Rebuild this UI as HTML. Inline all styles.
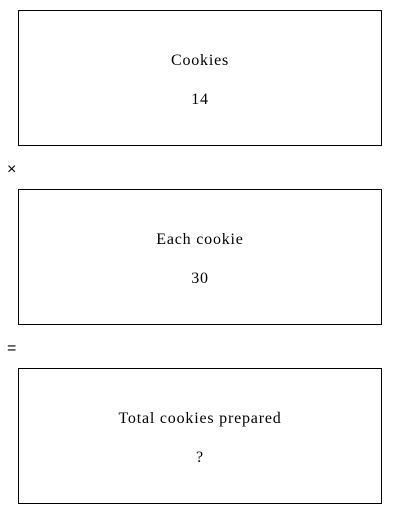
<!DOCTYPE html>
<html><head><style>
body{margin:0;width:400px;height:514px;background:#fff;position:relative;font-family:"Liberation Serif",serif;color:#000}
.box{position:absolute;left:18px;width:362px;height:134px;border:1px solid #000;font-size:16px;letter-spacing:0.8px}
.box div{position:absolute;left:0;right:0;text-align:center}
.op{position:absolute;left:7px;font-family:"Liberation Sans",sans-serif;font-size:16px}
</style></head><body>
<div class="box" style="top:10px"><div style="top:41px">Cookies</div><div style="top:80px">14</div></div>
<div class="op" style="top:161px">×</div>
<div class="box" style="top:189px"><div style="top:41px">Each cookie</div><div style="top:80px">30</div></div>
<div class="op" style="top:340px">=</div>
<div class="box" style="top:368px"><div style="top:41px">Total cookies prepared</div><div style="top:80px">?</div></div>
</body></html>
